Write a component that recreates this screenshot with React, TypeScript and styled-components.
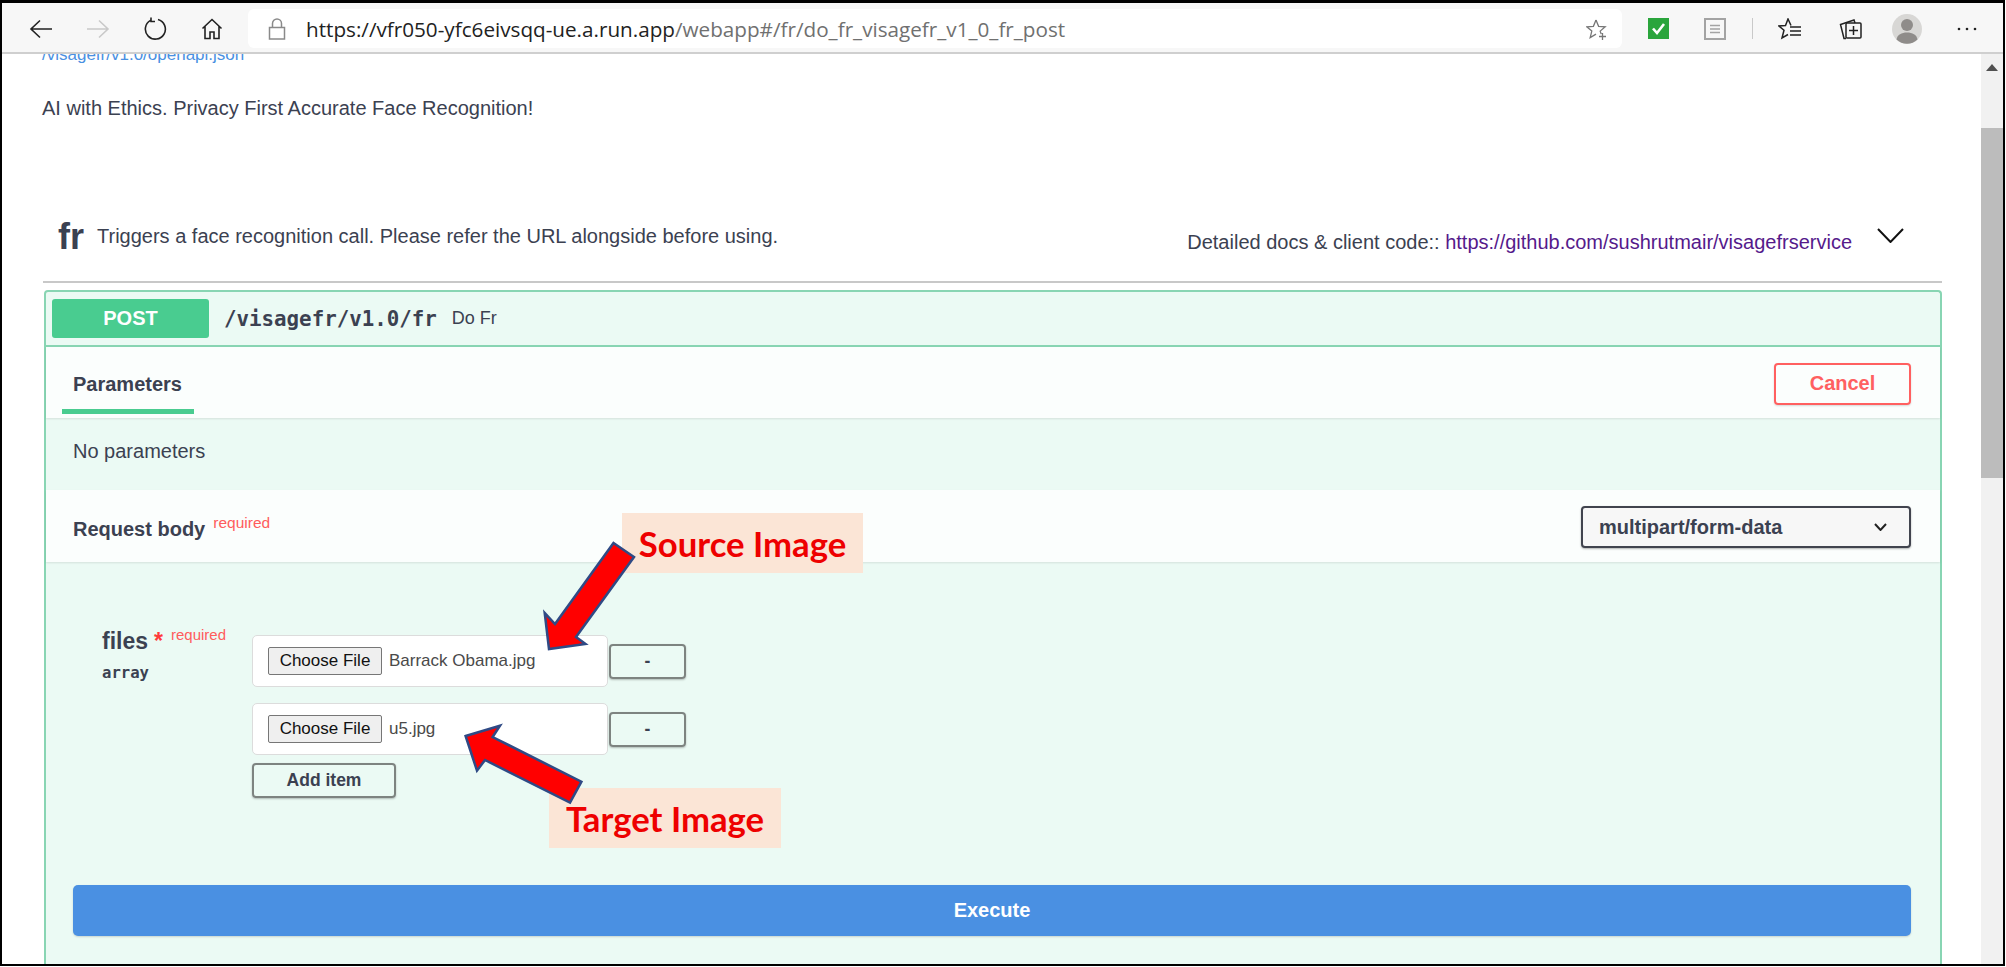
import React, { FC, ReactNode } from "react"
import styled, { createGlobalStyle } from "styled-components"

const SANS = `"Liberation Sans", Arial, sans-serif`
const INK = "#3b4151"

const GlobalStyle = createGlobalStyle`
  html, body {
    margin: 0;
    background: #fff;
  }
  * {
    box-sizing: border-box;
  }
`

const Frame = styled.div`
  position: relative;
  display: flex;
  flex-direction: column;
  width: 2005px;
  height: 966px;
  overflow: hidden;
  border: solid #000;
  border-width: 3px 2px 2px 2px;
  font-family: ${SANS};
  color: ${INK};
`

/* browser chrome */
const Toolbar = styled.div`
  display: flex;
  align-items: center;
  flex: 0 0 51px;
  padding: 2px 0 0 10px;
  background: #f7f7f7;
  border-bottom: 2px solid #cfcfcf;
`

const Slot = styled.div<{ $w?: number }>`
  display: flex;
  align-items: center;
  justify-content: center;
  flex: 0 0 ${({ $w }) => $w ?? 57}px;
`

const UrlBox = styled.div`
  display: flex;
  align-items: center;
  flex: 0 0 1374px;
  height: 39px;
  margin: 0 8px 0 8px;
  padding: 0 14px 0 20px;
  background: #fff;
  border-radius: 6px;
`

const UrlText = styled.span`
  flex: 1;
  margin-left: 20px;
  font-family: "Open Sans", sans-serif;
  font-size: 20.68px;
  white-space: nowrap;
  color: #707070;
  b {
    font-weight: 400;
    color: #222;
  }
`

const Separator = styled.div`
  flex: 0 0 1px;
  height: 21px;
  margin-left: 9px;
  background: #c9c9c9;
`

const Viewport = styled.div`
  display: flex;
  flex: 1;
  min-height: 0;
`

const Page = styled.main`
  flex: 1;
  min-width: 0;
  overflow: hidden;
  padding: 0 39px 0 42px;
`

const Scrollbar = styled.div`
  flex: 0 0 22px;
  display: flex;
  flex-direction: column;
  background: #f1f1f1;
`

const ScrollUp = styled.div`
  display: flex;
  align-items: center;
  justify-content: center;
  flex: 0 0 26px;
`

const ScrollThumb = styled.div`
  flex: 0 0 350px;
  margin-top: 48px;
  background: #bcbcbc;
`

/* swagger page */
const SpecLink = styled.a`
  display: block;
  margin: -9px 0 0 -2px;
  font-size: 17px;
  line-height: 20px;
  color: #4990e2;
`

const Description = styled.p`
  margin: 31px 0 0 -2px;
  font-size: 20px;
  line-height: 24px;
  color: ${INK};
`

const TagHeader = styled.div`
  display: flex;
  align-items: center;
  height: 77px;
  margin-top: 86px;
  margin-left: -1px;
  padding: 0 0 14px 15px;
  border-bottom: 2px solid #c8c8c8;
`

const TagName = styled.span`
  font-size: 36px;
  font-weight: 700;
  color: ${INK};
`

const TagDescription = styled.span`
  margin-left: 13px;
  font-size: 20px;
  color: ${INK};
`

const TagDocs = styled.span`
  margin: 12px 0 0 auto;
  font-size: 20px;
  color: ${INK};
  a {
    color: #551a8b;
  }
`

const TagChevron = styled.div`
  display: flex;
  justify-content: center;
  flex: 0 0 76px;
  margin: 0 14px 3px 0;
`

const Operation = styled.section`
  margin-top: 7px;
  padding-bottom: 40px;
  background: #ebfaf4;
  border: 2px solid #88d5b3;
  border-bottom: 0;
  border-radius: 4px 4px 0 0;
`

const OperationSummary = styled.div`
  display: flex;
  align-items: center;
  height: 55px;
  padding: 0 0 0 6px;
  border-bottom: 2px solid #88d5b3;
`

const MethodBadge = styled.span`
  display: flex;
  align-items: center;
  justify-content: center;
  flex: 0 0 157px;
  height: 39px;
  font-size: 20px;
  font-weight: 700;
  color: #fff;
  background: #49cc90;
  border-radius: 3px;
`

const PathText = styled.span`
  margin-left: 15px;
  font-family: "DejaVu Sans Mono", monospace;
  font-size: 20.8px;
  font-weight: 700;
  color: ${INK};
`

const SummaryText = styled.span`
  margin-left: 15px;
  font-size: 18px;
  color: ${INK};
`

const SectionHeader = styled.div<{ $height: number }>`
  display: flex;
  align-items: center;
  justify-content: space-between;
  height: ${({ $height }) => $height}px;
  padding: 2px 29px 0 0;
  background: #fbfefd;
  box-shadow: 0 1px 2px rgba(0, 0, 0, 0.1);
`

const Tab = styled.div`
  display: flex;
  align-items: center;
  align-self: stretch;
  width: 132px;
  margin: 0 0 4px 16px;
  padding: 10px 0 0 11px;
  font-size: 20px;
  font-weight: 700;
  color: ${INK};
  border-bottom: 5px solid #49cc90;
`

const CancelButton = styled.button`
  width: 137px;
  height: 42px;
  padding: 0;
  font-family: ${SANS};
  font-size: 20px;
  font-weight: 700;
  color: #ff6060;
  background: transparent;
  border: 2px solid #ff6060;
  border-radius: 4px;
  box-shadow: 0 1px 2px rgba(0, 0, 0, 0.15);
`

const NoParameters = styled.div`
  display: flex;
  align-items: center;
  height: 72px;
  padding: 0 0 6px 27px;
  font-size: 20px;
  color: ${INK};
`

const BodyTitle = styled.div`
  margin-left: 27px;
  font-size: 20px;
  font-weight: 700;
  color: ${INK};
`

const RequiredSup = styled.sup`
  margin-left: 8px;
  font-size: 15.5px;
  font-weight: 400;
  color: #ff5c5c;
`

const MediaSelect = styled.div`
  display: flex;
  align-items: center;
  justify-content: space-between;
  width: 330px;
  height: 42px;
  padding: 0 22px 0 16px;
  font-size: 20px;
  font-weight: 700;
  color: ${INK};
  background: #f7f7f7;
  border: 2px solid #41444e;
  border-radius: 4px;
  box-shadow: 0 1px 2px rgba(0, 0, 0, 0.3);
`

const BodyContent = styled.div`
  display: grid;
  grid-template-columns: 150px 1fr;
  padding: 73px 0 0 56px;
`

const FieldLabel = styled.div``

const FieldName = styled.div`
  margin-top: -12px;
  font-size: 23px;
  font-weight: 700;
  line-height: 24px;
  color: ${INK};
  em {
    margin-left: 6px;
    font-style: normal;
    color: #ff3b3b;
  }
  sup {
    margin-left: 8px;
    font-size: 15px;
    font-weight: 400;
    color: #ff5c5c;
  }
`

const FieldType = styled.div`
  margin-top: 11px;
  font-family: "DejaVu Sans Mono", monospace;
  font-size: 15.6px;
  font-weight: 700;
  line-height: 18px;
  color: ${INK};
`

const FileRows = styled.div`
  display: flex;
  flex-direction: column;
  gap: 16px;
`

const FileRow = styled.div`
  display: flex;
  align-items: center;
  gap: 1px;
`

const FileInput = styled.div`
  display: flex;
  align-items: center;
  width: 356px;
  height: 52px;
  padding-left: 15px;
  font-size: 17px;
  color: #4a4a4a;
  background: #fff;
  border: 1px solid #dcdcdc;
  border-radius: 5px;
`

const ChooseFile = styled.button`
  width: 114px;
  height: 28px;
  margin-right: 7px;
  padding: 0;
  font-family: ${SANS};
  font-size: 17px;
  color: #111;
  background: #efefef;
  border: 1px solid #767676;
  border-radius: 2px;
`

const ActionButton = styled.button<{ $width: number }>`
  width: ${({ $width }) => $width}px;
  height: 35px;
  padding: 0;
  font-family: ${SANS};
  font-size: 17.5px;
  font-weight: 700;
  color: ${INK};
  background: transparent;
  border: 2px solid #7d8380;
  border-radius: 4px;
  box-shadow: 0 1px 2px rgba(0, 0, 0, 0.25);
`

const AddItem = styled(ActionButton)`
  margin-top: -8px;
`

const ExecuteButton = styled.button`
  display: block;
  width: 1838px;
  height: 51px;
  margin: 87px 0 0 27px;
  padding: 0;
  font-family: ${SANS};
  font-size: 20px;
  font-weight: 700;
  color: #fff;
  background: #4a90e2;
  border: 0;
  border-radius: 5px;
  box-shadow: 0 1px 2px rgba(0, 0, 0, 0.15);
`

/* slide annotations on top of the page */
const Callout = styled.div<{ $left: number; $top: number; $width: number }>`
  position: absolute;
  left: ${({ $left }) => $left}px;
  top: ${({ $top }) => $top}px;
  width: ${({ $width }) => $width}px;
  height: 60px;
  display: flex;
  align-items: center;
  justify-content: center;
  font-family: Lato, sans-serif;
  font-size: 34.7px;
  font-weight: 700;
  color: #ee0000;
  background: #fbe5d6;
`

const ArrowLayer = styled.svg`
  position: absolute;
  left: -2px;
  top: -3px;
  pointer-events: none;
`

const Icon: FC<{ size?: number; children: ReactNode }> = ({ size = 26, children }) => (
  <svg width={size} height={size} viewBox="0 0 26 26" fill="none" stroke="currentColor" strokeWidth="1.5">
    {children}
  </svg>
)

const BackArrow: FC<{ color: string; flip?: boolean }> = ({ color, flip }) => (
  <svg width="24" height="20" viewBox="0 0 24 20" fill="none" stroke={color} strokeWidth="1.6">
    <g transform={flip ? "matrix(-1 0 0 1 24 0)" : undefined}>
      <path d="M2 10H23M11 1.5 2 10l9 8.5" />
    </g>
  </svg>
)

const Chevron: FC<{ w: number; h: number; sw: number; color: string }> = ({ w, h, sw, color }) => (
  <svg width={w} height={h} viewBox={`0 0 ${w} ${h}`} fill="none" stroke={color} strokeWidth={sw}>
    <path d={`M1 1 ${w / 2} ${h - 1} ${w - 1} 1`} />
  </svg>
)

const FileField: FC<{ name: string }> = ({ name }) => (
  <FileRow>
    <FileInput>
      <ChooseFile>Choose File</ChooseFile>
      {name}
    </FileInput>
    <ActionButton $width={77}>-</ActionButton>
  </FileRow>
)

export default function App() {
  return (
    <Frame>
      <GlobalStyle />
      <Toolbar>
        <Slot><BackArrow color="#222" /></Slot>
        <Slot><BackArrow color="#c9c9c9" flip /></Slot>
        <Slot>
          <svg width="24" height="24" viewBox="0 0 24 24" fill="none" stroke="#222" strokeWidth="1.6">
            <path d="M7.5 3.4A10 10 0 1 0 15 2.5M8 .5v4h4" />
          </svg>
        </Slot>
        <Slot>
          <svg width="22" height="22" viewBox="0 0 22 22" fill="none" stroke="#222" strokeWidth="1.6">
            <path d="M1.5 10.5 11 1.5l9.5 9M4 8.5V20.500h5v-6.500h4V20.500h5V8.500" />
          </svg>
        </Slot>
        <UrlBox>
          <svg width="18" height="22" viewBox="0 0 18 22" fill="none" stroke="#8a8a8a" strokeWidth="1.5">
            <rect x="1.500" y="9.500" width="15" height="11.500" />
            <path d="M4.500 9.500V5.500a4.500 4.500 0 0 1 9 0v4" />
          </svg>
          <UrlText>
            <b>https://vfr050-yfc6eivsqq-ue.a.run.app</b>/webapp#/fr/do_fr_visagefr_v1_0_fr_post
          </UrlText>
          <svg width="22" height="22" viewBox="0 0 22 22" fill="none" stroke="#777" strokeWidth="1.3">
            <path d="M10 2l2.600 6.300 6.600.5-5 4.300 1 3M14 12.800M10 2 7.400 8.300l-6.600.5 5 4.300-1.600 6.500 5.800-3.500M13 18.500h7M16.500 15v7" />
          </svg>
        </UrlBox>
        <Slot $w={56}>
          <svg width="21" height="21" viewBox="0 0 21 21">
            <rect width="21" height="21" fill="#2aa53c" />
            <path d="M5 10.500 9 15l7-9" fill="none" stroke="#fff" strokeWidth="2.600" />
          </svg>
        </Slot>
        <Slot>
          <svg width="22" height="22" viewBox="0 0 22 22" fill="none" stroke="#a3a3a3">
            <rect x="1" y="1" width="20" height="20" strokeWidth="2" />
            <path d="M6 7.500h10M6 11h10M6 14.500h10" strokeWidth="1.300" />
          </svg>
        </Slot>
        <Separator />
        <Slot $w={74}>
          <svg width="24" height="22" viewBox="0 0 24 22" fill="none" stroke="#222" strokeWidth="1.500">
            <path d="M13 7.500 10 1 7.500 7.500l-6.500.5 5 4.300L4 20l6-3.500M12 9h11M12 13h11M12 17h11" />
          </svg>
        </Slot>
        <Slot $w={46}>
          <Icon>
            <rect x="9" y="7" width="15" height="15" rx="1" stroke="#222" />
            <path d="M9 22.500H7L3.500 8.500 17 4l1 3M16.500 10v9M12 14.500h9" stroke="#222" />
          </Icon>
        </Slot>
        <Slot $w={68}>
          <svg width="30" height="30" viewBox="0 0 30 30">
            <circle cx="15" cy="15" r="15" fill="#d8d7d5" />
            <circle cx="15" cy="11" r="6" fill="#8f8c8a" />
            <path d="M4.500 25.500c1-5 5-7 10.500-7s9.500 2 10.500 7a15 15 0 0 1-21 0z" fill="#8f8c8a" />
          </svg>
        </Slot>
        <Slot $w={52}>
          <svg width="20" height="4" viewBox="0 0 20 4" fill="#222">
            <circle cx="2" cy="2" r="1.300" />
            <circle cx="10" cy="2" r="1.300" />
            <circle cx="18" cy="2" r="1.300" />
          </svg>
        </Slot>
      </Toolbar>
      <Viewport>
        <Page>
          <SpecLink>/visagefr/v1.0/openapi.json</SpecLink>
          <Description>AI with Ethics. Privacy First Accurate Face Recognition!</Description>
          <TagHeader>
            <TagName>fr</TagName>
            <TagDescription>Triggers a face recognition call. Please refer the URL alongside before using.</TagDescription>
            <TagDocs>
              Detailed docs &amp; client code:: <a>https://github.com/sushrutmair/visagefrservice</a>
            </TagDocs>
            <TagChevron>
              <Chevron w={27} h={15} sw={2} color="#111" />
            </TagChevron>
          </TagHeader>
          <Operation>
            <OperationSummary>
              <MethodBadge>POST</MethodBadge>
              <PathText>/visagefr/v1.0/fr</PathText>
              <SummaryText>Do Fr</SummaryText>
            </OperationSummary>
            <SectionHeader $height={71}>
              <Tab>Parameters</Tab>
              <CancelButton>Cancel</CancelButton>
            </SectionHeader>
            <NoParameters>No parameters</NoParameters>
            <SectionHeader $height={72}>
              <BodyTitle>
                Request body<RequiredSup>required</RequiredSup>
              </BodyTitle>
              <MediaSelect>
                multipart/form-data
                <Chevron w={13} h={8} sw={2} color="#222" />
              </MediaSelect>
            </SectionHeader>
            <BodyContent>
              <FieldLabel>
                <FieldName>
                  files<em>*</em>
                  <sup>required</sup>
                </FieldName>
                <FieldType>array</FieldType>
              </FieldLabel>
              <FileRows>
                <FileField name="Barrack Obama.jpg" />
                <FileField name="u5.jpg" />
                <AddItem $width={144}>Add item</AddItem>
              </FileRows>
            </BodyContent>
            <ExecuteButton>Execute</ExecuteButton>
          </Operation>
        </Page>
        <Scrollbar>
          <ScrollUp>
            <svg width="12" height="7" viewBox="0 0 12 7" fill="#505050">
              <path d="M0 7 6 0l6 7z" />
            </svg>
          </ScrollUp>
          <ScrollThumb />
        </Scrollbar>
      </Viewport>
      <Callout $left={620} $top={510} $width={241}>Source Image</Callout>
      <Callout $left={547} $top={785} $width={232}>Target Image</Callout>
      <ArrowLayer width="2006" height="967" viewBox="0 0 2006 967">
        <g fill="#ff0000" stroke="#2f4a85" strokeWidth="2.500" strokeLinejoin="miter">
          <path d="M613.500 543 634 557 576 637l9.500 7L549 649l-4.300-36L555 624z" />
          <path d="M465.600 736 500 725.700 492.600 737 581.400 781.700 570 802.700 485 760 477 770.700z" />
        </g>
      </ArrowLayer>
    </Frame>
  )
}
